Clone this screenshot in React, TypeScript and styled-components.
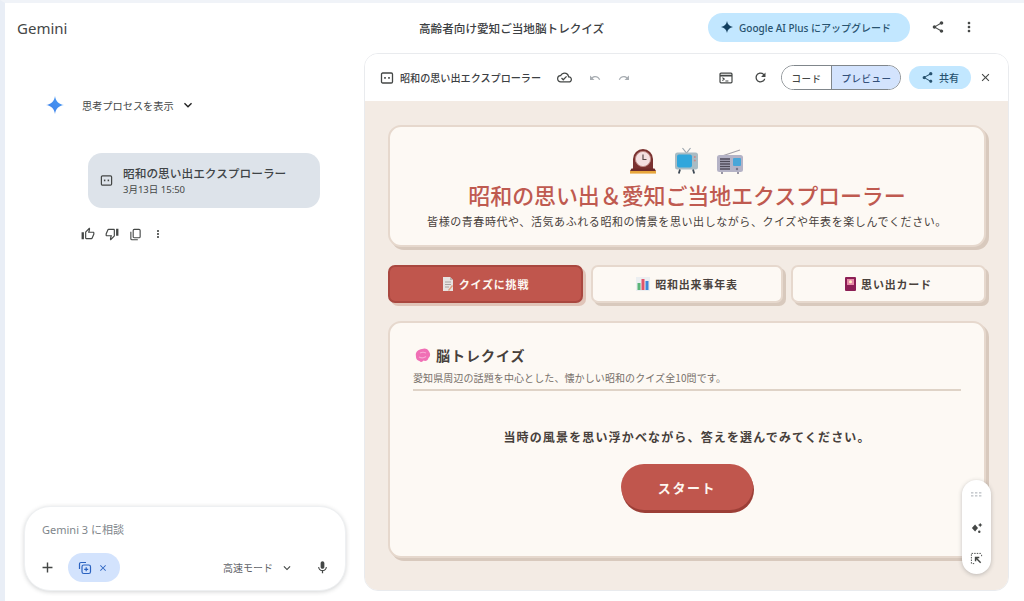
import React from 'react';
import styled, { createGlobalStyle } from 'styled-components';
import {
  MdAdd,
  MdClose,
  MdKeyboardArrowDown,
  MdMic,
  MdMoreVert,
  MdOutlineCloudDone,
  MdOutlineRedo,
  MdOutlineThumbDown,
  MdOutlineThumbUp,
  MdOutlineUndo,
  MdRefresh,
  MdShare,
} from 'react-icons/md';

const GlobalStyle = createGlobalStyle`
  html, body {
    margin: 0;
    padding: 0;
    height: 100%;
    background: #fff;
    font-family: "Noto Sans CJK JP", "Noto Sans", sans-serif;
    overflow: hidden;
  }
  #root { height: 100%; }
`;

const Page = styled.div`
  width: 1024px;
  height: 601px;
  box-sizing: border-box;
  border-top: 3px solid #f0f3f8;
  border-left: 5px solid #e9eef6;
  display: flex;
  flex-direction: column;
  background: #fff;
`;

const Header = styled.header`
  height: 50px;
  flex: none;
  display: flex;
  align-items: center;
  padding: 0 47px 0 12px;
`;

const Brand = styled.div`
  font-family: "Noto Sans", sans-serif;
  font-size: 15px;
  color: #444746;
  flex: none;
  width: 356px;
  margin-top: -1px;
`;

const ChatTitle = styled.div`
  flex: 1;
  padding-left: 46px;
  font-size: 11.6px;
  font-weight: 500;
  color: #3c4043;
  margin-top: -1px;
`;

const UpgradeButton = styled.div`
  width: 202px;
  height: 29px;
  margin-top: -2px;
  border-radius: 15px;
  background: #c2e7ff;
  color: #28536f;
  display: flex;
  align-items: center;
  gap: 6px;
  padding-left: 13px;
  box-sizing: border-box;
  font-size: 10px;
  font-weight: 500;
  font-family: "Noto Sans", "Noto Sans CJK JP", sans-serif;
`;

const HeaderIcons = styled.div`
  display: flex;
  align-items: center;
  gap: 16px;
  margin-left: 21px;
  color: #444746;
  margin-top: -2px;
`;

const Body = styled.div`
  flex: 1;
  min-height: 0;
  display: flex;
  padding-bottom: 10px;
`;

const ChatColumn = styled.section`
  width: 359px;
  flex: none;
  display: flex;
  flex-direction: column;
  padding: 0 18px 0 19px;
  box-sizing: border-box;
`;

const ThinkingRow = styled.div`
  display: flex;
  align-items: center;
  margin: 42px 0 0 22px;
  height: 20px;
  font-size: 10.2px;
  color: #444746;
`;

const ThinkingLabel = styled.span`
  margin-left: 18px;
  margin-right: 6px;
`;

const ArtifactCard = styled.div`
  margin: 38px 0 0 64px;
  width: 232px;
  height: 55px;
  border-radius: 14px;
  background: #dde3ea;
  display: flex;
  align-items: center;
  padding-left: 12px;
  box-sizing: border-box;
  gap: 10px;
  color: #444746;
`;

const ArtifactTitle = styled.div`
  font-size: 11.7px;
  line-height: 16px;
  font-weight: 500;
  color: #3f4447;
`;

const ArtifactDate = styled.div`
  font-family: "Noto Sans", "Noto Sans CJK JP", sans-serif;
  font-size: 9.5px;
  line-height: 14px;
  margin-top: 2px;
  color: #444746;
`;

const ActionRow = styled.div`
  display: flex;
  align-items: center;
  gap: 10px;
  margin: 19px 0 0 57px;
  color: #444746;
`;

const Composer = styled.div`
  margin-top: auto;
  height: 85px;
  border-radius: 26px;
  background: #fff;
  box-shadow: 0 1px 4px rgba(60, 64, 67, 0.22);
  border: 1px solid #eef0f2;
  box-sizing: border-box;
  padding: 14px 15px 8px 17px;
  display: flex;
  flex-direction: column;
  justify-content: space-between;
`;

const Placeholder = styled.div`
  font-family: "Noto Sans", "Noto Sans CJK JP", sans-serif;
  font-size: 11px;
  color: #80868b;
`;

const ComposerRow = styled.div`
  display: flex;
  align-items: center;
  color: #444746;
  margin-left: -3px;
`;

const ToolChip = styled.div`
  width: 52px;
  height: 29px;
  border-radius: 15px;
  background: #d3e3fd;
  color: #2a62c0;
  display: flex;
  align-items: center;
  justify-content: center;
  gap: 6px;
  margin-left: 12px;
  padding-right: 2px;
  box-sizing: border-box;
`;

const ModeLabel = styled.span`
  margin-left: auto;
  font-size: 10px;
  color: #5f6368;
  margin-right: 7px;
`;

const MicWrap = styled.span`
  display: inline-flex;
  margin-left: 21px;
`;

const Panel = styled.section`
  flex: none;
  width: 645px;
  position: relative;
  border-radius: 14px;
  overflow: hidden;
  border: 1px solid #e9ebee;
  box-sizing: border-box;
  display: flex;
  flex-direction: column;
`;

const Toolbar = styled.div`
  height: 47px;
  flex: none;
  display: flex;
  align-items: center;
  padding: 0 16px 0 15px;
  background: #fff;
  color: #444746;
`;

const ToolbarTitle = styled.span`
  font-size: 10.1px;
  font-weight: 500;
  color: #3c4043;
  margin: 0 16px 0 6px;
`;

const MutedIcon = styled.span`
  display: inline-flex;
  color: #a8adb2;
  margin-left: 17px;
`;

const ToolbarRight = styled.div`
  margin-left: auto;
  display: flex;
  align-items: center;
`;

const RefreshWrap = styled.span`
  display: inline-flex;
  margin-left: 20px;
`;

const ViewSwitch = styled.div`
  display: flex;
  width: 120px;
  height: 25px;
  margin-left: 13px;
  border: 1px solid #80868b;
  border-radius: 13px;
  overflow: hidden;
  box-sizing: border-box;
`;

const ViewOption = styled.div<{ $active?: boolean }>`
  display: flex;
  align-items: center;
  justify-content: center;
  font-size: 9.5px;
  font-weight: 500;
  letter-spacing: 0.5px;
  color: ${p => (p.$active ? '#34507a' : '#444746')};
  background: ${p => (p.$active ? '#d3e3fd' : '#fff')};
  border-left: ${p => (p.$active ? '1px solid #80868b' : 'none')};
  width: ${p => (p.$active ? '69px' : '49px')};
  flex: none;
`;

const ShareButton = styled.div`
  width: 62px;
  height: 23px;
  margin-left: 8px;
  border-radius: 12px;
  background: #c2e7ff;
  color: #28536f;
  display: flex;
  align-items: center;
  justify-content: center;
  gap: 5px;
  font-size: 10px;
  font-weight: 500;
`;

const CloseWrap = styled.span`
  display: inline-flex;
  margin-left: 8px;
  color: #444746;
`;

const Canvas = styled.div`
  flex: 1;
  min-height: 0;
  background: #f3ebe4;
  padding: 24px 22px 0 23px;
  display: flex;
  flex-direction: column;
`;

const Card = styled.div`
  background: #fdf9f4;
  border: 2px solid #e6d8cd;
  border-radius: 13px;
  box-shadow: 3px 3px 0 #d8c9bd;
  box-sizing: border-box;
`;

const Hero = styled(Card)`
  height: 122px;
  flex: none;
  display: flex;
  flex-direction: column;
  align-items: center;
  padding-top: 20px;
`;

const EmojiRow = styled.div`
  display: flex;
  align-items: center;
  gap: 17px;
  height: 27px;
  margin-left: -1px;
`;

const HeroTitle = styled.h1`
  margin: 6px 0 0;
  font-size: 22px;
  line-height: 28px;
  font-weight: 500;
  letter-spacing: -0.1px;
  color: #bf5a50;
`;

const HeroText = styled.p`
  margin: 5px 0 0;
  font-size: 11px;
  line-height: 16px;
  letter-spacing: 0.58px;
  color: #47403b;
`;

const Tabs = styled.div`
  display: grid;
  grid-template-columns: 195px 192px 195px;
  gap: 8px;
  margin-top: 18px;
  flex: none;
`;

const Tab = styled.div<{ $active?: boolean }>`
  height: 38px;
  border-radius: 7px;
  box-sizing: border-box;
  display: flex;
  align-items: center;
  justify-content: center;
  gap: 5px;
  font-size: 11px;
  font-weight: 700;
  letter-spacing: 0.8px;
  background: ${p => (p.$active ? '#c0564d' : '#fdf9f4')};
  color: ${p => (p.$active ? '#fdf6f0' : '#4a423d')};
  border: 2px solid ${p => (p.$active ? '#a9473f' : '#e6d8cd')};
  box-shadow: 3px 3px 0 ${p => (p.$active ? '#e0c4b8' : '#d8c9bd')};
`;

const QuizCard = styled(Card)`
  margin-top: 18px;
  height: 237px;
  flex: none;
  padding: 0 23px;
  display: flex;
  flex-direction: column;
`;

const QuizHead = styled.div`
  display: flex;
  align-items: center;
  gap: 5px;
  margin: 20px 0 0 2px;
  height: 24px;
  font-size: 14px;
  font-weight: 700;
  letter-spacing: 1px;
  color: #47403b;
`;

const QuizSub = styled.div`
  font-size: 10px;
  line-height: 14px;
  color: #77706a;
  margin-top: 4px;
  letter-spacing: 0.1px;
`;

const Divider = styled.div`
  height: 2px;
  background: #dfd3c7;
  margin-top: 4px;
`;

const QuizPrompt = styled.p`
  margin: 37px 0 0;
  text-align: center;
  font-size: 12px;
  line-height: 18px;
  font-weight: 700;
  letter-spacing: 1.15px;
  color: #47403b;
`;

const StartButton = styled.div`
  width: 132px;
  height: 46px;
  margin: 18px auto 0;
  border-radius: 23px;
  background: #c0564d;
  box-shadow: 1px 3px 0 #9c3f37;
  color: #fdf6f0;
  display: flex;
  align-items: center;
  justify-content: center;
  font-size: 13px;
  font-weight: 700;
  letter-spacing: 1.6px;
`;

const FloatingTools = styled.div`
  position: absolute;
  right: 17px;
  bottom: 16px;
  width: 29px;
  height: 94px;
  border-radius: 15px;
  background: #fff;
  box-shadow: 0 1px 4px rgba(60, 64, 67, 0.3);
  display: flex;
  flex-direction: column;
  align-items: center;
  padding: 12px 0 9px;
  box-sizing: border-box;
  justify-content: space-between;
`;

const SparkleWrap = styled.span`
  display: inline-flex;
  margin-top: 6px;
`;

const CodeBoxIcon = ({ size = 13 }: { size?: number }) => (
  <svg width={size} height={size} viewBox="0 0 14 14" fill="none">
    <rect x="1.5" y="2" width="11" height="10" rx="1.2" stroke="currentColor" strokeWidth="1.3" />
    <rect x="4.2" y="6" width="1.6" height="1.8" fill="currentColor" />
    <rect x="8.2" y="6" width="1.6" height="1.8" fill="currentColor" />
  </svg>
);

const GeminiStar = () => (
  <svg width="18" height="18" viewBox="0 0 18 18">
    <defs>
      <linearGradient id="star" x1="0" y1="1" x2="1" y2="0">
        <stop offset="0" stopColor="#3f7ee8" />
        <stop offset="1" stopColor="#4a9df5" />
      </linearGradient>
    </defs>
    <path d="M9 0C9.6 5 13 8.4 18 9 13 9.6 9.6 13 9 18 8.4 13 5 9.6 0 9 5 8.4 8.4 5 9 0Z" fill="url(#star)" />
  </svg>
);

const SmallStar = () => (
  <svg width="12" height="12" viewBox="0 0 18 18">
    <path d="M9 0C9.6 5 13 8.4 18 9 13 9.6 9.6 13 9 18 8.4 13 5 9.6 0 9 5 8.4 8.4 5 9 0Z" fill="#123f5f" />
  </svg>
);

const CopyIcon = () => (
  <svg width="13" height="13" viewBox="0 0 14 14" fill="none" stroke="currentColor" strokeWidth="1.2">
    <rect x="4.5" y="1.5" width="7.5" height="9" rx="1.2" />
    <path d="M2 4v7.5A1.2 1.2 0 0 0 3.2 12.7H9.5" />
  </svg>
);

const StackPlusIcon = () => (
  <svg width="14" height="14" viewBox="0 0 14 14" fill="none" stroke="currentColor" strokeWidth="1.2">
    <path d="M1.5 8V3A1.5 1.5 0 0 1 3 1.5h5" />
    <rect x="4" y="4" width="8.5" height="8.5" rx="1.8" />
    <path d="M8.2 6.3v4M6.2 8.3h4" />
  </svg>
);

const TerminalIcon = () => (
  <svg width="14" height="14" viewBox="0 0 14 14" fill="none" stroke="currentColor" strokeWidth="1.2">
    <rect x="1" y="2.2" width="12" height="9.6" rx="1" />
    <path d="M1 4.6h12" strokeWidth="1.6" />
    <path d="M3.4 6.6l1.8 1.5-1.8 1.5M6.4 10h3" />
  </svg>
);

const GripIcon = () => (
  <svg width="11" height="6" viewBox="0 0 11 6" fill="#c9ccd0">
    {[0, 4, 8].map(x => [0, 3].map(y => <rect key={`${x}-${y}`} x={x} y={y} width="2.4" height="1.6" />))}
  </svg>
);

const SparkleIcon = () => (
  <svg width="13" height="13" viewBox="0 0 14 14" fill="#444746">
    <path d="M5.5 2.8 8.6 6.5 5.5 10.2 2 6.5Z" />
    <path d="M11 .8 11.8 2.4 13.4 3.2 11.8 4 11 5.6 10.2 4 8.6 3.2 10.2 2.4Z" />
    <circle cx="10" cy="10.5" r="1.3" />
  </svg>
);

const SelectArrowIcon = () => (
  <svg width="13" height="13" viewBox="0 0 14 14" fill="none" stroke="#444746" strokeWidth="1">
    <path d="M1.5 12.5v-11h11" strokeDasharray="1.6 1.2" />
    <path d="M12.5 3v1.5M3 12.5h1.5" />
    <path d="M11.5 11.5 6 6M6 10V6h4" strokeWidth="1.6" />
  </svg>
);

const ClockEmoji = () => (
  <svg width="28" height="27" viewBox="0 0 28 27">
    <path d="M4 22V12a10 10 0 0 1 20 0v10Z" fill="#7a3230" />
    <circle cx="14" cy="12" r="7.6" fill="#f3dfe0" stroke="#c08a86" strokeWidth="1" />
    <path d="M14 7.5V12.5H17.5" stroke="#5a4a4a" strokeWidth="1.2" fill="none" />
    <path d="M2.5 21.5h23L27 24H1Z" fill="#6e2b29" />
    <rect x="1" y="24" width="26" height="2.6" fill="#e8a63c" />
  </svg>
);

const TvEmoji = () => (
  <svg width="25" height="27" viewBox="0 0 25 27">
    <path d="M8.5 1 12.5 6 16.5 1" stroke="#9aa5ad" strokeWidth="1.2" fill="none" />
    <rect x="1" y="5.5" width="23" height="17" rx="2.5" fill="#a9bcc4" />
    <rect x="3" y="7.5" width="15" height="13" rx="2" fill="#2fa6dc" />
    <circle cx="20.8" cy="10" r="1" fill="#c98a8a" />
    <circle cx="20.8" cy="13.5" r="1" fill="#c98a8a" />
    <path d="M6 22.5 4.8 26.5M19 22.5 20.2 26.5" stroke="#3f4a55" strokeWidth="1.8" />
  </svg>
);

const RadioEmoji = () => (
  <svg width="28" height="27" viewBox="0 0 28 27">
    <path d="M6 9 24 3" stroke="#a4a0a8" strokeWidth="1.1" />
    <rect x="1" y="8" width="26" height="17" rx="2.5" fill="#b5b3c6" />
    <path d="M4 12h10M4 14.5h10M4 17h10M4 19.5h10M4 22h10" stroke="#4e4a58" strokeWidth="1.4" />
    <rect x="17" y="11" width="8" height="8" rx="1" fill="#4aa6d8" />
    <circle cx="21" cy="22" r="1.2" fill="#77748a" />
    <circle cx="6" cy="26" r="1" fill="#77748a" />
    <circle cx="22" cy="26" r="1" fill="#77748a" />
  </svg>
);

const MemoEmoji = () => (
  <svg width="12" height="14" viewBox="0 0 12 14">
    <path d="M1 0h7l3 3v11H1Z" fill="#e6e3e1" />
    <path d="M8 0v3h3Z" fill="#b9b5b3" />
    <path d="M3 5h6M3 7.5h6M3 10h4" stroke="#a8a2a0" strokeWidth="1" />
    <path d="M6 13 10 8l1 1-4 5Z" fill="#e0a080" />
  </svg>
);

const ChartEmoji = () => (
  <svg width="14" height="14" viewBox="0 0 14 14">
    <rect width="14" height="14" fill="#eceff1" />
    <rect x="1.5" y="6" width="3" height="7" fill="#5cb578" />
    <rect x="5.5" y="2" width="3" height="11" fill="#e2556b" />
    <rect x="9.5" y="4" width="3" height="9" fill="#3f88d8" />
  </svg>
);

const AlbumEmoji = () => (
  <svg width="11" height="14" viewBox="0 0 11 14">
    <rect width="11" height="14" rx="1" fill="#8c1f55" />
    <rect x="2" y="2" width="7" height="6" fill="#e78aa8" />
    <circle cx="5.5" cy="4.8" r="1.5" fill="#fff2c4" />
  </svg>
);

const BrainEmoji = () => (
  <svg width="16" height="15" viewBox="0 0 16 15">
    <path d="M7 1c3-1.3 6 0 7 2.5 1.6 1.7 1.5 5-.5 6.5-.5 2.6-3 3.6-5 2.6-1 1.6-3 1.9-4 .4C2.5 13 .5 10.5 1 8 0 5 2.5 1.5 7 1Z" fill="#f06fb5" />
    <path d="M5 5c2-1 4-1 6 0M4 9c2 1 5 1 7-.5" stroke="#f7a8d4" strokeWidth="1.2" fill="none" />
  </svg>
);

const App: React.FC = () => (
  <>
    <GlobalStyle />
    <Page>
      <Header>
        <Brand>Gemini</Brand>
        <ChatTitle>高齢者向け愛知ご当地脳トレクイズ</ChatTitle>
        <UpgradeButton>
          <SmallStar />
          Google AI Plus にアップグレード
        </UpgradeButton>
        <HeaderIcons>
          <MdShare size={14} />
          <MdMoreVert size={16} />
        </HeaderIcons>
      </Header>
      <Body>
        <ChatColumn>
          <ThinkingRow>
            <GeminiStar />
            <ThinkingLabel>思考プロセスを表示</ThinkingLabel>
            <MdKeyboardArrowDown size={16} color="#1f1f1f" />
          </ThinkingRow>
          <ArtifactCard>
            <CodeBoxIcon />
            <div>
              <ArtifactTitle>昭和の思い出エクスプローラー</ArtifactTitle>
              <ArtifactDate>3月13日 15:50</ArtifactDate>
            </div>
          </ArtifactCard>
          <ActionRow>
            <MdOutlineThumbUp size={14} />
            <MdOutlineThumbDown size={14} />
            <CopyIcon />
            <MdMoreVert size={12} />
          </ActionRow>
          <Composer>
            <Placeholder>Gemini 3 に相談</Placeholder>
            <ComposerRow>
              <MdAdd size={17} />
              <ToolChip>
                <StackPlusIcon />
                <MdClose size={10} />
              </ToolChip>
              <ModeLabel>高速モード</ModeLabel>
              <MdKeyboardArrowDown size={14} />
              <MicWrap>
                <MdMic size={15} />
              </MicWrap>
            </ComposerRow>
          </Composer>
        </ChatColumn>
        <Panel>
          <Toolbar>
            <CodeBoxIcon size={14} />
            <ToolbarTitle>昭和の思い出エクスプローラー</ToolbarTitle>
            <MdOutlineCloudDone size={15} />
            <MutedIcon>
              <MdOutlineUndo size={12} />
            </MutedIcon>
            <MutedIcon>
              <MdOutlineRedo size={12} />
            </MutedIcon>
            <ToolbarRight>
              <TerminalIcon />
              <RefreshWrap>
                <MdRefresh size={15} />
              </RefreshWrap>
              <ViewSwitch>
                <ViewOption>コード</ViewOption>
                <ViewOption $active>プレビュー</ViewOption>
              </ViewSwitch>
              <ShareButton>
                <MdShare size={13} />
                共有
              </ShareButton>
              <CloseWrap>
                <MdClose size={13} />
              </CloseWrap>
            </ToolbarRight>
          </Toolbar>
          <Canvas>
            <Hero>
              <EmojiRow>
                <ClockEmoji />
                <TvEmoji />
                <RadioEmoji />
              </EmojiRow>
              <HeroTitle>昭和の思い出＆愛知ご当地エクスプローラー</HeroTitle>
              <HeroText>皆様の青春時代や、活気あふれる昭和の情景を思い出しながら、クイズや年表を楽しんでください。</HeroText>
            </Hero>
            <Tabs>
              <Tab $active>
                <MemoEmoji />
                クイズに挑戦
              </Tab>
              <Tab>
                <ChartEmoji />
                昭和出来事年表
              </Tab>
              <Tab>
                <AlbumEmoji />
                思い出カード
              </Tab>
            </Tabs>
            <QuizCard>
              <QuizHead>
                <BrainEmoji />
                脳トレクイズ
              </QuizHead>
              <QuizSub>愛知県周辺の話題を中心とした、懐かしい昭和のクイズ全10問です。</QuizSub>
              <Divider />
              <QuizPrompt>当時の風景を思い浮かべながら、答えを選んでみてください。</QuizPrompt>
              <StartButton>スタート</StartButton>
            </QuizCard>
          </Canvas>
          <FloatingTools>
            <GripIcon />
            <SparkleWrap>
              <SparkleIcon />
            </SparkleWrap>
            <SelectArrowIcon />
          </FloatingTools>
        </Panel>
      </Body>
    </Page>
  </>
);

export default App;
